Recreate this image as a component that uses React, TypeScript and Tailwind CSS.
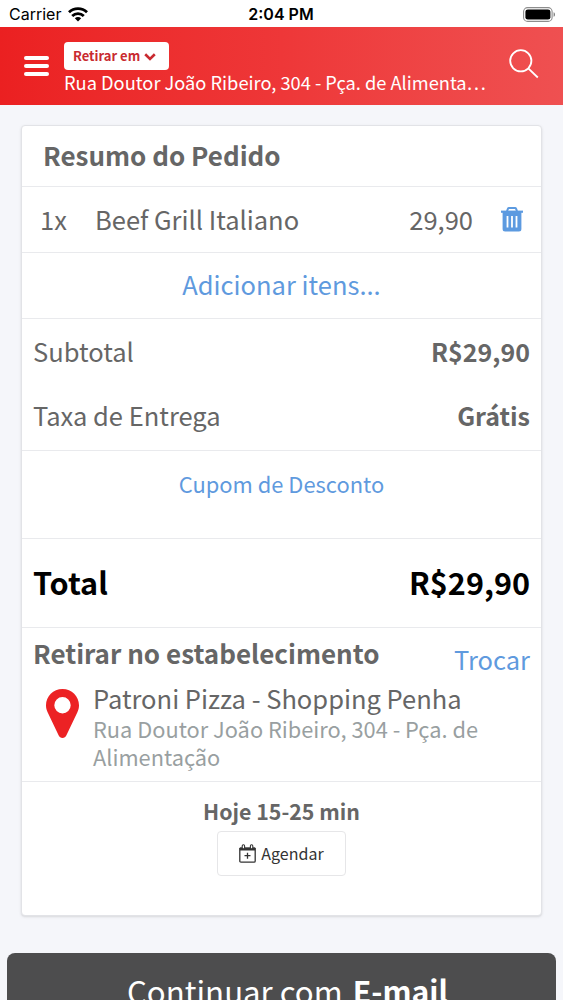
import type { ReactNode } from "react";
import { clsx } from "clsx";

interface RowProps {
  children: ReactNode;
  className?: string;
}

/** Card row with the hairline that closes it. */
function Row({ children, className }: RowProps) {
  return <div className={clsx("flex shrink-0 border-b border-[#e9eaed] leading-none", className)}>{children}</div>;
}

function WifiIcon() {
  return (
    <svg width="20" height="15" viewBox="0 0 20 15" fill="none" stroke="#000" strokeWidth="2.8">
      <path d="M1 5.3C6 .4 14 .4 19 5.3" />
      <path d="M4.2 9c3.3-3.2 8.3-3.2 11.6 0" />
      <path d="M10 14.6 6.8 11.3c1.8-1.7 4.6-1.7 6.4 0z" fill="#000" stroke="none" />
    </svg>
  );
}

function BatteryIcon() {
  return (
    <svg width="33" height="15" viewBox="0 0 33 15">
      <rect x=".6" y=".6" width="28.5" height="13.8" rx="4" fill="none" stroke="#8d8d8d" strokeWidth="1.1" />
      <rect x="2.4" y="2.4" width="25" height="10.2" rx="2.4" />
      <path d="M30.6 5.2c1.8.7 1.8 3.9 0 4.6z" fill="#777" />
    </svg>
  );
}

function TrashIcon() {
  return (
    <svg width="22" height="25" viewBox="0 0 22 25" fill="none" stroke="#5c9ae0">
      <path d="M6 4.2 6.9 1.9Q7.200 1.100 8 1.100h6q.8 0 1.100.8l.9 2.300" strokeWidth="2" />
      <path d="M0 4.700h22" strokeWidth="2.200" />
      <path d="M1.600 5h18.800v17q0 2.500-2.500 2.500H4.100q-2.500 0-2.500-2.500z" fill="#5c9ae0" stroke="none" />
      <path d="M6.500 9v11.500M11 9v11.500M15.500 9v11.500" stroke="#fff" strokeWidth="1.800" />
    </svg>
  );
}

function PinIcon() {
  return (
    <svg width="33" height="49" viewBox="0 0 33 49" fill="#ec2224">
      <path
        fillRule="evenodd"
        d="M16.5 0C7.2 0 0 7.2 0 16.3c0 2.7.6 4.8 1.6 7l11.1 23.2c.7 1.5 2 2.5 3.8 2.5s3.1-1 3.8-2.5l11.1-23.2c1-2.2 1.6-4.3 1.6-7C33 7.2 25.8 0 16.5 0zm0 8.1a8.2 8.2 0 1 0 0 16.4 8.2 8.2 0 0 0 0-16.4z"
      />
    </svg>
  );
}

function CalendarPlusIcon() {
  return (
    <svg width="17" height="19" viewBox="0 0 17 19" fill="none" stroke="#333">
      <path d="M.8 4.6h15.4v12.4q0 1.2-1.2 1.2H2q-1.2 0-1.2-1.2z" strokeWidth="1.3" />
      <path d="M.8 3.3h15.4v3.2H.8z" fill="#333" stroke="none" />
      <rect x="3.2" y=".8" width="2.4" height="4" rx="1.1" fill="#fff" strokeWidth="1.1" />
      <rect x="11.4" y=".8" width="2.4" height="4" rx="1.1" fill="#fff" strokeWidth="1.1" />
      <path d="M8.5 8.7v6M5.5 11.7h6" strokeWidth="1.3" />
    </svg>
  );
}

function StatusBar() {
  return (
    <div className="grid h-[27px] grid-cols-[1fr_auto_1fr] items-center bg-white pt-px pr-[7px] pl-[9px] font-['Inter',sans-serif] text-black">
      <div className="flex items-center gap-[7px] text-[16px] leading-none">
        <span>Carrier</span>
        <WifiIcon />
      </div>
      <span className="pr-[3px] text-center text-[16px] leading-none font-semibold">2:04 PM</span>
      <div className="flex justify-end">
        <BatteryIcon />
      </div>
    </div>
  );
}

function Header() {
  return (
    <header className="flex h-[78px] bg-gradient-to-r from-[#eb2021] via-[#ee3738] to-[#ef5051] pl-[24px] text-white">
      <div className="flex w-[40px] flex-col gap-1 pt-[29px]">
        <span className="h-1 w-[25px] rounded-full bg-white" />
        <span className="h-1 w-[25px] rounded-full bg-white" />
        <span className="h-1 w-[25px] rounded-full bg-white" />
      </div>
      <div className="flex w-[426px] flex-col pt-[15px]">
        <button className="flex h-[28px] w-[105px] items-center gap-1 rounded bg-white pb-[2px] pl-[9px] text-[13px] leading-none font-bold text-[#c92a30]">
          <span className="whitespace-nowrap">Retirar em</span>
          <svg className="mt-[3px]" width="12" height="8" viewBox="0 0 12 8" fill="none" stroke="currentColor" strokeWidth="2.6">
            <path d="M1.2 1.3 6 6l4.8-4.7" />
          </svg>
        </button>
        <span className="text-[18.25px] leading-[24px] whitespace-nowrap">
          Rua Doutor João Ribeiro, 304 - Pça. de Alimenta…
        </span>
      </div>
      <svg className="mt-[22px] ml-[19px]" width="30" height="30" viewBox="0 0 30 30" fill="none" stroke="#fff" strokeWidth="1.8">
        <circle cx="11.8" cy="11.8" r="10.6" />
        <path d="m19.3 19.3 9.5 9.2" />
      </svg>
    </header>
  );
}

function OrderSummary() {
  return (
    <section className="mx-[21px] mt-5 flex h-[791px] flex-col rounded border border-[#e2e3e7] bg-white text-[25.5px] text-[#666] shadow-sm">
      <Row className="h-[61px] items-center pb-[2px] pl-[21px] text-[26px] font-bold">Resumo do Pedido</Row>
      <Row className="h-[66px] items-center pr-[18px] pl-[18px]">
        <span className="w-[55px] pb-[2px]">1x</span>
        <span className="flex-1 pb-[2px]">Beef Grill Italiano</span>
        <span className="mr-[28px] pb-[2px]">29,90</span>
        <TrashIcon />
      </Row>
      <Row className="h-[66px] items-center justify-center pb-[3px] text-[#5f9ade]">Adicionar itens...</Row>
      <Row className="h-[132px] flex-col justify-between pt-[19px] pr-[11px] pb-[22px] pl-[11px]">
        <div className="flex justify-between">
          <span>Subtotal</span>
          <span className="pt-px text-[25px] font-bold">R$29,90</span>
        </div>
        <div className="flex justify-between">
          <span>Taxa de Entrega</span>
          <span className="pt-px text-[25px] font-bold">Grátis</span>
        </div>
      </Row>
      <Row className="h-[88px] justify-center pt-[22px] text-[21.9px] text-[#5f9ade]">Cupom de Desconto</Row>
      <Row className="h-[89px] items-center justify-between px-[11px] pb-[2px] text-[30.6px] font-bold text-black">
        <span>Total</span>
        <span>R$29,90</span>
      </Row>
      <Row className="h-[154px] flex-col px-[11px] pt-[12px]">
        <div className="flex h-[45px] justify-between">
          <span className="text-[26px] font-bold">Retirar no estabelecimento</span>
          <span className="pt-[6px] text-[#5f9ade]">Trocar</span>
        </div>
        <div className="flex pl-[13px]">
          <div className="w-[47px] pt-[4px]">
            <PinIcon />
          </div>
          <div className="flex flex-col">
            <span>Patroni Pizza - Shopping Penha</span>
            <span className="w-[400px] pt-[4px] text-[21.8px] leading-[28px] text-[#999fa1]">
              Rua Doutor João Ribeiro, 304 - Pça. de Alimentação
            </span>
          </div>
        </div>
      </Row>
      <div className="flex flex-col items-center pt-[18px] leading-none">
        <span className="text-[21.3px] leading-[22px] font-bold">Hoje 15-25 min</span>
        <button className="mt-[9px] flex h-[45px] w-[129px] items-center justify-center gap-[5px] rounded border border-[#e6e6e8] text-[16px] text-[#333]">
          <CalendarPlusIcon />
          <span className="pb-[2px]">Agendar</span>
        </button>
      </div>
    </section>
  );
}

export default function App() {
  return (
    <div className="h-[1000px] w-[563px] overflow-hidden bg-[#f5f6fa] font-['Noto_Sans_CJK_SC','Noto_Sans',sans-serif]">
      <StatusBar />
      <Header />
      <OrderSummary />
      <button className="mx-[7px] mt-[37px] flex h-[80px] w-[549px] justify-center gap-[10px] rounded-lg bg-[#4d4d4e] pt-[22px] pl-[12px] text-[31.2px] leading-none text-white">
        <span>Continuar com</span>
        <strong className="text-[30.2px]">E-mail</strong>
      </button>
    </div>
  );
}
